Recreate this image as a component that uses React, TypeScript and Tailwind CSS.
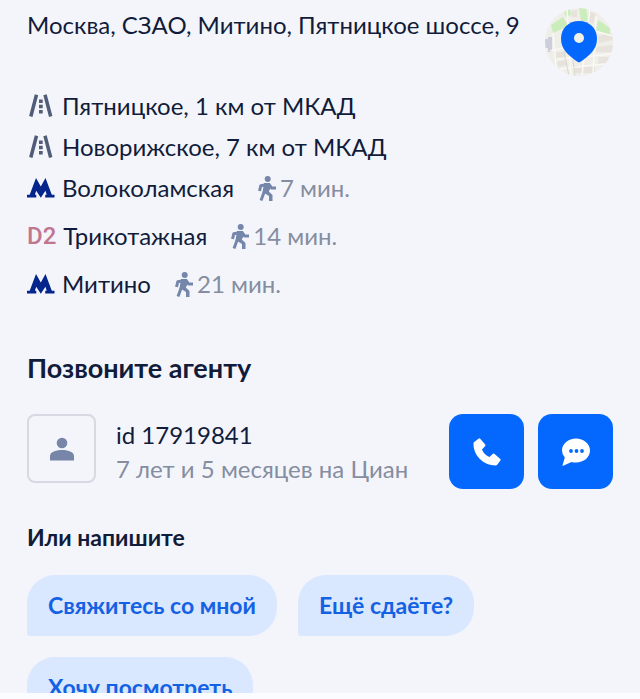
const highways = ["Пятницкое, 1 км от МКАД", "Новорижское, 7 км от МКАД"];

const stations = [
  { name: "Волоколамская", time: "7 мин.", line: "metro" },
  { name: "Трикотажная", time: "14 мин.", line: "d2" },
  { name: "Митино", time: "21 мин.", line: "metro" },
];

const replies = ["Свяжитесь со мной", "Ещё сдаёте?", "Хочу посмотреть"];

function MapPin() {
  return (
    <svg viewBox="0 0 68 68" className="size-[68px]" aria-hidden>
      <defs>
        <clipPath id="map-circle">
          <circle cx="34" cy="34" r="34" />
        </clipPath>
      </defs>
      <g clipPath="url(#map-circle)">
        <rect width="68" height="68" fill="#efeee8" />
        <path d="M6 17l12-8 5 9-15 7zM34 0h7l2 13h-7zM53 12l12 8v9l-14-6zM19 4l6-3 1 6-5 2z" fill="#cbedbb" />
        <path d="M3 29h4v15H3v-4H0v-9h3z" fill="#cdcedb" />
        <path
          d="M44 3l7 3-3 10-6-3zM53 28l15-3v7l-14 3zM52 39l16-2v7H51zM30 58h20v7H30zM54 49h11l-2 7H53zM9 45l11-2 1 6-11 2zM11 54l10-2 1 5-8 2zM26 3l6-1v7h-5z"
          fill="#e7e3dc"
        />
        <path
          d="M8 25l4 43M22 0l4 68M5 43l22-5M12 51l56-5M15 61l53-6M45 0l-8 68M51 8l-3 60M50 23l18 5"
          stroke="#faf9f6"
          strokeWidth="1.500"
          fill="none"
        />
        <path d="M19 44l5 24M28 52l2 16" stroke="#dad9cb" strokeWidth="1" />
      </g>
      <path d="M34 13C23.500 13 16 20.500 16 30.500c0 11 7.500 17 16.500 23.300q1.500 1 3 0C44.500 47.500 52 41.500 52 30.500 52 20.500 44.500 13 34 13z" fill="#0468ff" />
      <circle cx="34" cy="30" r="5" fill="#f1f1ea" />
    </svg>
  );
}

function RoadIcon() {
  return (
    <svg viewBox="0 0 27 24" className="h-6 w-[27px] shrink-0" aria-hidden>
      <path d="M9.500 0.700L3.800 22.500M18 0.700L23.700 22.500" stroke="#515d78" strokeWidth="3.500" />
      <path d="M12 5.500h3.700v3.500H12zM12 10.700h3.700v3.500H12zM12 16h3.700v3.500H12z" fill="#515d78" />
    </svg>
  );
}

function MetroIcon() {
  return (
    <svg viewBox="0 0 28 20" className="h-5 w-7 shrink-0" aria-hidden>
      <path
        d="M9 0l4.800 8.500L18.500 0l6.300 16.700h2.700v2.800h-9.300v-2.800h1.500l-1.300-3.900-4.600 7-4.600-7-1.300 3.900h1.400v2.800H0v-2.800h2.700z"
        fill="#03258c"
      />
    </svg>
  );
}

function WalkIcon() {
  return (
    <svg viewBox="0 0 18 25" className="h-[25px] w-[18px] shrink-0" aria-hidden>
      <circle cx="9.700" cy="3" r="3" fill="#7586ab" />
      <path
        d="M8.500 8.700L2.800 9.800 1.500 15M6.500 15L3 24.500M11.500 9l2 3H18"
        stroke="#7586ab"
        strokeWidth="3"
        fill="none"
        strokeLinejoin="round"
      />
      <path d="M6 7h6l1.500 3-2.700 5.500L14.500 19v6H11v-5l-4-2.500-2.500-1z" fill="#7586ab" />
    </svg>
  );
}

function PersonIcon() {
  return (
    <svg viewBox="0 0 26 24" className="h-6 w-[26px]" fill="#7785a8" aria-hidden>
      <circle cx="13" cy="6" r="5.300" />
      <path d="M1 23.500V19c0-3.600 5-6 12-6s12 2.400 12 6v4.500z" />
    </svg>
  );
}

function PhoneIcon() {
  return (
    <svg viewBox="0 0 28 28" className="size-7" fill="#fff" aria-hidden>
      <path d="M5.800.5Q6.500 0 7.200.7l5 5.800q.6.700 0 1.400L9 11.500c1.200 3.500 4 6.200 7.500 7.500l3.400-3.200q.7-.6 1.400 0l6 5.200q.7.700.1 1.400l-3.200 4.300q-.5.800-1.500.8C10.500 27.500 0 17.500.5 5.300q0-.8.700-1.300z" />
    </svg>
  );
}

function ChatIcon() {
  return (
    <svg viewBox="0 0 28 28" className="size-7" aria-hidden>
      <path d="M14 .5C21.500.5 28 5.500 28 12.500s-6.500 12-14 12q-2.500 0-4.500-.6L1.200 27.800q-1 .3-.6-.8l2.200-7.600Q0 16.500 0 12.500c0-7 6.500-12 14-12z" fill="#fff" />
      <g fill="#0468ff">
        <circle cx="9" cy="13" r="1.900" />
        <circle cx="14.500" cy="13" r="1.900" />
        <circle cx="20" cy="13" r="1.900" />
      </g>
    </svg>
  );
}

export default function App() {
  return (
    <div className="flex h-screen flex-col bg-[#f4f5fb] font-['Lato','Noto_Sans',sans-serif] text-2xl text-[#111c3a]">
      <main className="min-h-0 flex-1 overflow-hidden px-[27px] pt-2">
        <header className="flex items-start justify-between">
          <p className="leading-[34px]">Москва, СЗАО, Митино, Пятницкое шоссе, 9</p>
          <button type="button" aria-label="Показать на карте" className="shrink-0 rounded-full">
            <MapPin />
          </button>
        </header>

        <ul className="mt-[9px]">
          {highways.map((name) => (
            <li key={name} className="flex h-[41px] items-center gap-2">
              <RoadIcon />
              {name}
            </li>
          ))}
        </ul>

        <ul className="mt-[5px] flex flex-col gap-4">
          {stations.map((s) => (
            <li key={s.name} className="flex h-8 items-center">
              {s.line === "metro" ? (
                <MetroIcon />
              ) : (
                <span className="font-['Roboto',sans-serif] text-2xl font-medium text-[#c17690]">D2</span>
              )}
              <span className="ml-[7px]">{s.name}</span>
              <span className="ml-6 flex items-center gap-1 text-[#858da1]">
                <WalkIcon />
                {s.time}
              </span>
            </li>
          ))}
        </ul>

        <h2 className="mt-[50px] text-[27px] leading-9 font-bold">Позвоните агенту</h2>

        <section className="mt-7 flex items-start">
          <div className="flex size-[69px] shrink-0 items-center justify-center rounded-lg border-2 border-[#d6d9e1]">
            <PersonIcon />
          </div>
          <div className="ml-5 flex-1 pt-1 leading-[34px]">
            <p>id 17919841</p>
            <p className="text-[#858da1]">7 лет и 5 месяцев на Циан</p>
          </div>
          <div className="flex gap-3.5">
            <button
              type="button"
              aria-label="Позвонить"
              className="flex size-[75px] items-center justify-center rounded-[14px] bg-[#0468ff]"
            >
              <PhoneIcon />
            </button>
            <button
              type="button"
              aria-label="Написать"
              className="flex size-[75px] items-center justify-center rounded-[14px] bg-[#0468ff]"
            >
              <ChatIcon />
            </button>
          </div>
        </section>

        <h3 className="mt-8 text-[23px] leading-8 font-bold">Или напишите</h3>

        <div className="mt-[22px] flex flex-wrap gap-[21px]">
          {replies.map((text) => (
            <button
              key={text}
              type="button"
              className="h-[61px] rounded-[28px] rounded-bl-[3px] bg-[#d9e7ff] px-[21px] text-[23px] font-bold text-[#1462e4]"
            >
              {text}
            </button>
          ))}
        </div>
      </main>
      <footer className="h-1.5 shrink-0 bg-[#fafcff]" />
    </div>
  );
}
